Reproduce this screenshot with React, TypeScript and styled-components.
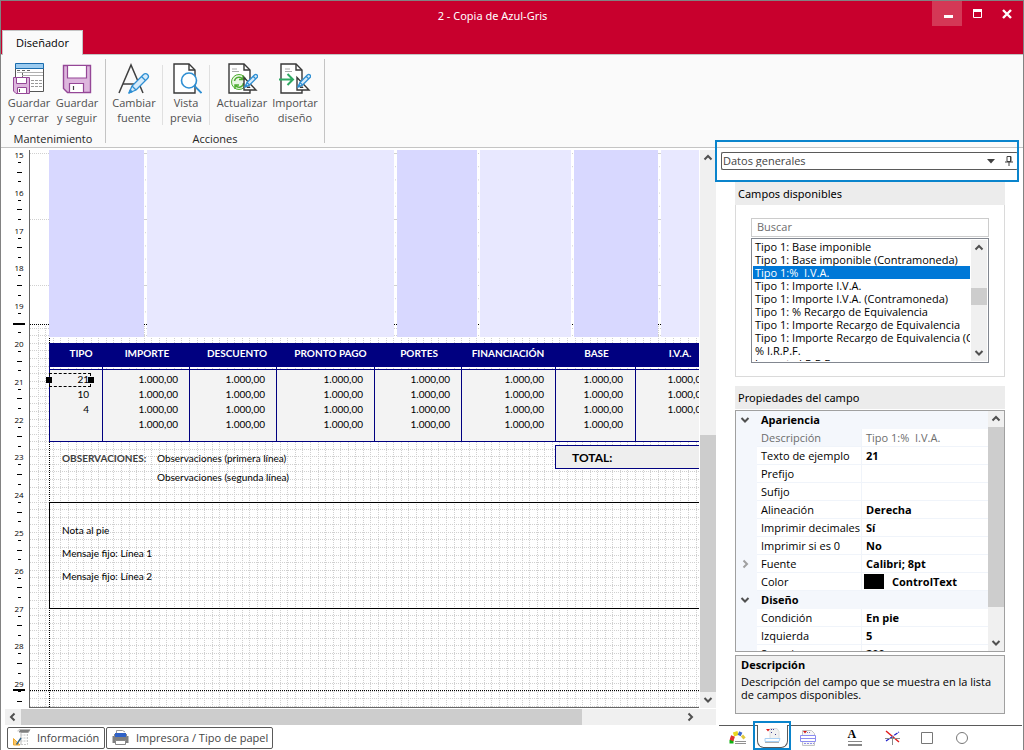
import React from "react";
import styled, { createGlobalStyle, css } from "styled-components";

const GlobalStyle = createGlobalStyle`
  * { box-sizing: border-box; }
  body { margin: 0; background: #fff; }
  button, input, select { font: inherit; color: inherit; }
  button { padding: 0; border: 0; background: none; cursor: pointer; }
`;

const ui = `"Open Sans", "Noto Sans", sans-serif`;
const heading = `"Noto Sans", "Open Sans", sans-serif`;
const doc = `Lato, "Open Sans", sans-serif`;

/* ---------- window frame ---------- */

const Window = styled.div`
  display: flex;
  flex-direction: column;
  height: 100vh;
  overflow: hidden;
  border: 1px solid #828282;
  border-bottom: 0;
  background: #fff;
  font: 11px/15px ${ui};
  color: #000;
`;

const TitleBar = styled.header`
  background: #c8002d;
  border-bottom: 1px solid #c4c4c4;
`;

const TitleRow = styled.div`
  display: flex;
  height: 29px;
  padding-right: 1px;
`;

const Title = styled.h1`
  flex: 1;
  margin: 0;
  padding-left: 52px;
  text-align: center;
  font-family: ${heading};
  font-size: 11px;
  font-weight: 400;
  line-height: 30px;
  color: #fff;
`;

const WindowButton = styled.button<{ $lit?: boolean }>`
  display: flex;
  align-items: center;
  justify-content: center;
  width: 30px;
  height: 25px;
  background: ${(p) => (p.$lit ? "#d43856" : "transparent")};
`;

const TabStrip = styled.nav`
  display: flex;
  height: 24px;
  padding-left: 1px;
`;

const RibbonTab = styled.button`
  width: 81px;
  height: 25px;
  padding-bottom: 1px;
  border: 1px solid #c4c4c4;
  border-bottom: 0;
  background: #fafafa;
  text-align: center;
`;

/* ---------- ribbon ---------- */

const Ribbon = styled.div`
  display: flex;
  height: 93px;
  background: #fafafa;
  border-bottom: 1px solid #c4c4c4;
`;

const RibbonGroup = styled.section`
  display: flex;
  flex-direction: column;
  align-items: center;
  margin: 4px 0;
  padding: 0 4px;
  border-right: 1px solid #c4c4c4;
`;

const RibbonItems = styled.div`
  display: flex;
  flex: none;
  height: 72px;
`;

const RibbonButton = styled.button<{ $w: number }>`
  display: flex;
  flex-direction: column;
  align-items: center;
  width: ${(p) => p.$w}px;
  padding-top: 3px;
  color: #505050;
  text-align: center;
  white-space: nowrap;

  svg {
    display: block;
    flex: none;
    margin-bottom: 1px;
  }
`;

const ItemDivider = styled.span`
  width: 1px;
  margin: 6px 4px;
  background: #e0e0e0;
`;

const GroupLabel = styled.span`
  color: #262626;
`;

/* ---------- designer ---------- */

const Main = styled.main`
  flex: 1;
  display: flex;
  min-height: 0;
`;

const Designer = styled.section`
  flex: 1;
  min-width: 0;
  display: flex;
  flex-direction: column;
  padding: 2px 0 1px;
`;

const Stage = styled.div`
  flex: 1;
  display: flex;
  min-height: 0;
`;

const Ruler = styled.div`
  width: 28px;
  padding-left: 8px;
  overflow: hidden;
  font-size: 8px;
`;

const RulerScale = styled.div`
  position: relative;
  display: flex;
  flex-direction: column;
  height: 567px;
`;

const Centimetre = styled.div`
  flex: 1;
  display: flex;
  flex-direction: column;
  align-items: center;
`;

const RulerNumber = styled.span`
  flex: 1;
  line-height: 9px;
`;

const Tick = styled.span<{ $long?: boolean }>`
  flex: 1;
  width: ${(p) => (p.$long ? 5 : 3)}px;
  padding-top: 3px;

  &::before {
    content: "";
    display: block;
    height: 1px;
    background: #000;
  }
`;

const BandMark = styled.span<{ $y: number }>`
  position: absolute;
  left: 4px;
  top: ${(p) => p.$y}px;
  width: 12px;
  height: 2px;
  background: #000;
`;

const Canvas = styled.div`
  position: relative;
  flex: 1;
  min-width: 0;
  margin-right: 1px;
  padding-left: 19px;
  overflow: hidden;
  border-left: 1px solid #666;
  border-bottom: 1px solid #666;
  background: #fff;
  font-family: ${doc};
  font-size: 10px;
`;

const GridLayer = styled.svg`
  position: absolute;
  left: 0;
  top: 0;
  width: 100%;
  height: 100%;
`;

const Sheet = styled.div`
  position: relative;
  width: 100%;
`;

const Bands = styled.div`
  display: flex;
  gap: 3px;
  height: 187px;
`;

const Band = styled.div<{ $w: number; $dark?: boolean }>`
  flex: none;
  width: ${(p) => p.$w}px;
  background: ${(p) => (p.$dark ? "#d8d8ff" : "#e8e8ff")};
`;

const TotalsTable = styled.table`
  width: 671px;
  margin-top: 6px;
  table-layout: fixed;
  border-collapse: separate;
  border-spacing: 0;
`;

const HeadCell = styled.th<{ $indent: number }>`
  height: 24px;
  padding: 0 0 4px ${(p) => p.$indent}px;
  background: #000080;
  color: #fff;
  text-align: center;
  white-space: nowrap;
`;

const GapCell = styled.td`
  height: 2px;
  padding: 0;
  border-left: 1px solid #000080;
`;

const DataCell = styled.td<{ $first: boolean; $last: boolean; $end: number }>`
  position: relative;
  padding: ${(p) => (p.$first ? 2 : 0)}px ${(p) => p.$end}px ${(p) => (p.$last ? 9 : 0)}px 0;
  border-left: 1px solid #000080;
  border-top: ${(p) => (p.$first ? "1px solid #000080" : "0")};
  border-bottom: ${(p) => (p.$last ? "1px solid #000080" : "0")};
  background: #f3f3f3;
  text-align: right;
  line-height: 15px;
`;

const Selection = styled.span`
  position: absolute;
  left: -1px;
  top: 3px;
  width: 42px;
  height: 14px;
  border: 1px dashed #000;

  &::before,
  &::after {
    content: "";
    position: absolute;
    top: 3px;
    width: 6px;
    height: 6px;
    background: #000;
  }
  &::before { left: -4px; }
  &::after { right: -4px; }
`;

const NotesRow = styled.div`
  display: grid;
  grid-template-columns: 95px 398px 180px;
  margin-top: 3px;
  padding-left: 13px;
  line-height: 19px;
`;

const NotesLabel = styled.strong`
  padding-top: 4px;
  color: #404040;
`;

const NotesText = styled.div`
  padding-top: 4px;
`;

const TotalBox = styled.strong`
  height: 24px;
  padding-left: 16px;
  border: 1px solid #000080;
  background: #eee;
  font-size: 12px;
  line-height: 24px;
`;

const FootBox = styled.div`
  width: 673px;
  height: 107px;
  margin-top: 15px;
  padding: 16px 12px;
  border: 1px solid #000;
  line-height: 23px;
`;

/* ---------- scroll bars ---------- */

const VScroll = styled.div`
  display: flex;
  flex-direction: column;
  flex: none;
  width: 16px;
  background: #f0f0f0;
`;

const HScroll = styled.div`
  display: flex;
  flex: none;
  height: 16px;
  margin: 1px 0 2px 4px;
  padding-right: 18px;
  background: #f0f0f0;
`;

const ScrollButton = styled.button`
  display: flex;
  flex: none;
  align-items: center;
  justify-content: center;
  width: 16px;
  height: 16px;
`;

const Track = styled.div<{ $row?: boolean }>`
  flex: 1;
  display: flex;
  flex-direction: ${(p) => (p.$row ? "row" : "column")};
`;

const Space = styled.span<{ $grow: number }>`
  flex: ${(p) => p.$grow};
`;

const Thumb = styled.span<{ $grow: number }>`
  flex: ${(p) => p.$grow};
  background: #cdcdcd;
`;

/* ---------- bottom tabs ---------- */

const SheetTabs = styled.nav`
  display: flex;
  gap: 1px;
  padding-left: 6px;
`;

const SheetTab = styled.button<{ $w: number; $gap: number }>`
  display: flex;
  align-items: center;
  gap: ${(p) => p.$gap}px;
  width: ${(p) => p.$w}px;
  height: 22px;
  padding: 0 0 1px 5px;
  border: 1px solid #5a5a5a;
  border-radius: 2px;
  color: #444;
  white-space: nowrap;
`;

/* ---------- side panel ---------- */

const Side = styled.aside`
  position: relative;
  display: flex;
  flex-direction: column;
  flex: none;
  width: 307px;
  padding: 4px 0 0 4px;
`;

const Callout = styled.span<{ $low?: boolean }>`
  position: absolute;
  z-index: 2;
  pointer-events: none;
  border: 2px solid #0a84cc;
  ${(p) =>
    p.$low
      ? css`left: 37px; bottom: 0; width: 38px; height: 29px;`
      : css`left: -1px; top: -8px; width: 304px; height: 42px;`}
`;

const PickerBar = styled.div`
  display: flex;
  align-items: center;
  height: 18px;
  margin: 0 5px 0 1px;
  border: 1px solid #5a5a5a;
  border-right: 0;
  border-radius: 2px;
`;

const Picker = styled.select`
  flex: 1;
  height: 16px;
  padding: 0 0 2px 1px;
  border: 0;
  outline: 0;
  background: none;
  appearance: none;
  color: #444;
`;

const PinButton = styled.button`
  display: flex;
  width: 19px;
  margin-left: 4px;
  justify-content: center;
`;

const PanelHead = styled.h2`
  height: 23px;
  margin: 0;
  padding-left: 3px;
  background: #ececec;
  font-family: ${heading};
  font-size: 11px;
  font-weight: 400;
  line-height: 23px;
`;

const Panel = styled.section`
  margin: 12px 18px 0 15px;
`;

const PropertyPanel = styled.section`
  margin: 9px 18px 0 15px;
  flex: 1;
  min-height: 0;
  display: flex;
  flex-direction: column;
`;

const FieldsBox = styled.div`
  height: 172px;
  padding: 13px 15px 0;
  border: 1px solid #dadada;
  border-top: 0;
`;

const Search = styled.input`
  display: block;
  width: 100%;
  height: 19px;
  padding: 0 5px 2px;
  border: 1px solid #ccc;
  outline: 0;

  &::placeholder { color: #6d6d6d; opacity: 1; }
`;

const ListFrame = styled.div`
  display: flex;
  height: 125px;
  margin-top: 1px;
  padding: 1px;
  border: 1px solid #828790;
`;

const FieldList = styled.ul`
  flex: 1;
  min-width: 0;
  margin: 0;
  padding: 0 1px 0 0;
  overflow: hidden;
  list-style: none;
`;

const FieldItem = styled.li<{ $on: boolean }>`
  padding-left: 2px;
  overflow: hidden;
  line-height: 13px;
  white-space: pre;
  background: ${(p) => (p.$on ? "#0078d7" : "transparent")};
  color: ${(p) => (p.$on ? "#fff" : "#000")};
`;

const PropFrame = styled.div`
  flex: 1;
  display: flex;
  min-height: 0;
  margin-top: 1px;
  border: 1px solid #a0a0a0;
`;

const PropClip = styled.div`
  flex: 1;
  min-width: 0;
  overflow: hidden;
  background: #f4f7fc;
`;

const PropTable = styled.table`
  width: 100%;
  table-layout: fixed;
  border-collapse: separate;
  border-spacing: 0;
`;

const Gutter = styled.td`
  width: 21px;
  height: 18px;
  padding: 0 3px 2px 0;
  text-align: center;
  line-height: 16px;

  svg { display: inline-block; vertical-align: middle; }
`;

const CategoryCell = styled.th`
  height: 18px;
  padding: 0 4px;
  text-align: left;
  line-height: 16px;
`;

const NameCell = styled.th<{ $dim?: boolean }>`
  width: 105px;
  padding: 0 0 0 4px;
  border-bottom: 1px solid #f0f4fa;
  border-right: 1px solid #f0f4fa;
  background: ${(p) => (p.$dim ? "transparent" : "#fff")};
  color: ${(p) => (p.$dim ? "#6d6d6d" : "#000")};
  font-weight: 400;
  text-align: left;
  line-height: 17px;
  white-space: nowrap;
`;

const ValueCell = styled.td<{ $dim?: boolean }>`
  padding: 0 0 0 4px;
  border-bottom: 1px solid #f0f4fa;
  background: #fff;
  color: ${(p) => (p.$dim ? "#6d6d6d" : "#000")};
  font-weight: ${(p) => (p.$dim ? 400 : 700)};
  line-height: 17px;
  white-space: pre;
`;

const Swatch = styled.span`
  display: inline-block;
  width: 20px;
  height: 15px;
  margin: 1px 8px 0 -2px;
  background: #000;
  vertical-align: top;
`;

const HelpBox = styled.div`
  flex: none;
  height: 59px;
  margin-top: 3px;
  padding: 2px 5px;
  border: 1px solid #a0a0a0;
  background: #f0f0f0;
  line-height: 13px;

  h3 {
    margin: 0 0 4px;
    font-size: 11px;
    font-weight: 700;
  }
  p { margin: 0; white-space: nowrap; }
`;

const ToolTabs = styled.nav`
  display: flex;
  height: 25px;
  margin: 11px 1px 0 -1px;
  border-top: 1px solid #5a5a5a;
`;

const ToolTab = styled.button<{ $on?: boolean; $w: number }>`
  display: flex;
  align-items: center;
  justify-content: center;
  width: ${(p) => p.$w}px;
  height: 23px;
  margin-top: ${(p) => (p.$on ? -1 : 0)}px;
  border: ${(p) => (p.$on ? "1px solid #5a5a5a" : "0")};
  border-top: 0;
  border-radius: 0 0 7px 7px;
  background: #fff;
`;

/* ---------- icons ---------- */

const Pencil = ({ x, y, s }: { x: number; y: number; s: number }) => (
  <g transform={`translate(${x} ${y}) scale(${s})`} stroke="#2f8fd3" strokeWidth={1.3 / s} strokeLinejoin="round">
    <path d="M0 20 3 13 14.5 1.500a2.600 2.600 0 0 1 4 4L7 17z" fill="#d6ebfa" />
    <path d="M3 13l4 4M12.500 3.500l4 4" fill="none" />
    <path d="M0 20l1.200-3 1.800 1.800z" fill="#2f8fd3" />
  </g>
);

const Page = () => (
  <>
    <path d="M1 1h15l6 6v23H1z" fill="#fff" stroke="#383838" strokeWidth="1.400" />
    <path d="M16 1v6h6" fill="none" stroke="#383838" strokeWidth="1.400" />
  </>
);

const IconSaveClose = () => (
  <svg width="32" height="32" viewBox="0 0 32 32">
    <path d="M2.500 3v26.500h28V3" fill="#fff" stroke="#555" />
    <path d="M2.500 1.500h28v5h-28z" fill="#9bcbf0" stroke="#1a6cae" />
    <path d="M4 8.500h3M9 8.500h3M14 8.500h3M9.500 10v6" stroke="#666" fill="none" />
    <path d="M4 10.500h26M9 13.500h21" stroke="#b0b0b0" fill="none" />
    <path d="M18 18.500h11M18 21.500h11M18 24.500h11" stroke="#999" strokeDasharray="3 1" fill="none" />
    <path d="M.5 15.500h16v16H3l-2.500-2.500z" fill="#ddb6dd" stroke="#954797" />
    <path d="M3.500 15.500h10v6h-10zM4.500 25.500h9v6h-9z" fill="#fff" stroke="#954797" />
    <path d="M6.500 27v3" stroke="#555" />
  </svg>
);

const IconSave = () => (
  <svg width="32" height="32" viewBox="0 0 32 32">
    <path d="M2.500 3.500h27v27H6.500l-4-4z" fill="#ddb6dd" stroke="#954797" strokeWidth="1.400" />
    <path d="M6.500 3.500h19v12.500h-19zM8.500 21.500h14v9h-14z" fill="#fff" stroke="#954797" strokeWidth="1.200" />
    <path d="M12.500 24v4" stroke="#444" strokeWidth="1.200" />
  </svg>
);

const IconFont = () => (
  <svg width="32" height="32" viewBox="0 0 32 32">
    <path d="M1 31 13 3l12 28M5 22h17" fill="none" stroke="#404040" strokeWidth="1.500" />
    <Pencil x={11} y={11} s={1} />
  </svg>
);

const IconPreview = () => (
  <svg width="32" height="32" viewBox="0 0 32 32">
    <g transform="translate(3 1)"><Page /></g>
    <circle cx="19" cy="18.500" r="7.500" fill="#fff" stroke="#2f8fd3" strokeWidth="1.600" />
    <path d="M24.500 24l7 7" stroke="#2f8fd3" strokeWidth="1.800" />
  </svg>
);

const Drafting = () => (
  <>
    <path d="M6 7h5M6 9.500h7" stroke="#aaa" />
    <path d="M18 15.500 30 28H18z" fill="#fff" stroke="#383838" strokeWidth="1.400" />
    <path d="M21 22.500v3h3z" fill="#fff" stroke="#383838" />
    <Pencil x={19} y={12} s={0.65} />
  </>
);

const IconRefresh = () => (
  <svg width="32" height="32" viewBox="0 0 32 32">
    <g transform="translate(2 1)"><Page /></g>
    <circle cx="13" cy="20" r="7.500" fill="#eaf6e4" stroke="#4fae32" />
    <path d="M8.500 19a4.500 4.500 0 0 1 8-2M17.500 21a4.500 4.500 0 0 1-8 2.500M17 13.500V17.500h-4M9 27v-4h4" fill="none" stroke="#4fae32" strokeWidth="1.500" />
    <Drafting />
  </svg>
);

const IconImport = () => (
  <svg width="32" height="32" viewBox="0 0 32 32">
    <g transform="translate(1 1)"><Page /></g>
    <path d="M0 17.500h13M8.500 12l5.500 5.500L8.500 23" fill="none" stroke="#2ea862" strokeWidth="2" />
    <Drafting />
  </svg>
);

const Chevron = ({ to, color = "#505050" }: { to: "up" | "down" | "left" | "right"; color?: string }) => {
  const d = {
    up: "M1.500 6.500 5 3l3.500 3.500",
    down: "M1.500 3 5 6.500 8.500 3",
    left: "M6.500 1.500 3 5l3.500 3.500",
    right: "M3.500 1.500 7 5 3.500 8.500",
  }[to];
  return (
    <svg width="10" height="10" viewBox="0 0 10 10">
      <path d={d} fill="none" stroke={color} strokeWidth="2" />
    </svg>
  );
};

const IconInfo = () => (
  <svg width="18" height="18" viewBox="0 0 18 18">
    <path d="M5 2.500C5 1 6 .5 7 .5h10l-1.500 3H8V16" fill="#fff" stroke="#bbb" />
    <path d="M6 3C6 1.500 7 1 8 1h9l-2 2.500H6z" fill="#808080" />
    <path d="M7.500 6h7M7.500 9h7M7.500 12h7M8 15.500h6.500V4" stroke="#c8c8c8" strokeDasharray="2 1" fill="none" />
    <path d="M.5 9.500V16H7z" fill="#f7c66b" stroke="#eda92f" />
    <path d="M3.500 15.500 8 9" stroke="#33658a" strokeWidth="1.400" />
  </svg>
);

const IconPrinter = () => (
  <svg width="17" height="16" viewBox="0 0 17 16">
    <path d="M4.500 3V.5h6L13 2" fill="#fff" stroke="#999" />
    <path d="M.5 6h16v7h-16z" fill="#808080" />
    <path d="M2 4h13v3H2z" fill="#888" />
    <path d="M3 3h11v4H3z" fill="#2f62c8" />
    <path d="M3.500 10.500h10v4h-10z" fill="#fff" stroke="#888" />
  </svg>
);

const IconPalette = () => (
  <svg width="18" height="18" viewBox="0 0 18 18">
    <path d="M2.500 14.500V11" stroke="#10b010" strokeWidth="4" />
    <path d="M2.500 11.500 4 7" stroke="#e03030" strokeWidth="4" />
    <path d="M4.500 5.500 9 4" stroke="#e8d820" strokeWidth="4" />
    <path d="M9.500 4 12.500 5.500" stroke="#3a66d0" strokeWidth="4" />
    <path d="M13 6.500 15.500 9.500" stroke="#e0c840" strokeWidth="3" />
    <path d="M6 12.500h11M6 14.500h11" stroke="#909090" />
  </svg>
);

const IconHeaderBand = () => (
  <svg width="18" height="18" viewBox="0 0 18 18">
    <path d="M6 1.500h7l2 3V12H6z" fill="#f1f1f1" stroke="#dcdcdc" />
    <path d="M2 2h4L4 4.500z" fill="#e01818" />
    <path d="M7 2.500h3M7 5.500h2M11 7.500h2" stroke="#404090" strokeDasharray="1 1" />
    <path d="M1 11.500h15l-1 3H1z" fill="#fff" stroke="#a8d0f4" />
    <path d="M1 15.500h14" stroke="#b0b0b0" />
  </svg>
);

const IconBodyBand = () => (
  <svg width="18" height="18" viewBox="0 0 18 18">
    <path d="M3.500 1.500h9l3 3v12h-12z" fill="#f6f6f6" stroke="#c4c4c4" />
    <path d="M4 2h4L6 4.500z" fill="#d01818" />
    <path d="M8 3.500h4" stroke="#8080c0" strokeDasharray="1 1" />
    <path d="M1.500 6.500h15v6h-15z" fill="#fff" stroke="#8c8cf0" />
    <path d="M1 9.500h16" stroke="#8c8cf0" />
    <path d="M5 14.500h10" stroke="#9090e8" strokeDasharray="2 1" />
  </svg>
);

const LetterTool = styled.span`
  display: flex;
  flex-direction: column;
  width: 14px;
  height: 17px;
  font: 700 12px/10px "Liberation Serif", serif;
  border-bottom: 1px solid #888;
  text-align: left;

  &::after {
    content: "";
    height: 4px;
    margin-top: 2px;
    border-top: 1px solid #888;
    border-bottom: 1px solid #888;
  }
`;

const IconLines = () => (
  <svg width="17" height="16" viewBox="0 0 17 16">
    <path d="M2 1 15 12" stroke="#e01818" strokeWidth="1.400" />
    <path d="M2 11 15 2" stroke="#2020c8" strokeWidth="1.200" strokeDasharray="4 1" />
    <path d="M1 8.500h15M8.500 6v9" stroke="#8a8a8a" />
  </svg>
);

/* ---------- data ---------- */

const columns = [
  { label: "TIPO", w: 53, indent: 11, end: 13 },
  { label: "IMPORTE", w: 87, indent: 3, end: 11 },
  { label: "DESCUENTO", w: 87, indent: 9, end: 11 },
  { label: "PRONTO PAGO", w: 98, indent: 11, end: 11 },
  { label: "PORTES", w: 87, indent: 3, end: 11 },
  { label: "FINANCIACIÓN", w: 94, indent: 0, end: 11 },
  { label: "BASE", w: 80, indent: 3, end: 12 },
  { label: "I.V.A.", w: 85, indent: 5, end: 13 },
];

const amount = "1.000,00";
const rows = ["21", "10", "4", ""].map((type, i) => [
  type,
  amount, amount, amount, amount, amount, amount,
  i < 3 ? amount : "",
]);

const fields = [
  "Tipo 1: Base imponible",
  "Tipo 1: Base imponible (Contramoneda)",
  "Tipo 1:%  I.V.A.",
  "Tipo 1: Importe I.V.A.",
  "Tipo 1: Importe I.V.A. (Contramoneda)",
  "Tipo 1: % Recargo de Equivalencia",
  "Tipo 1: Importe Recargo de Equivalencia",
  "Tipo 1: Importe Recargo de Equivalencia (Contramoneda)",
  "% I.R.P.F.",
  "Importe I.R.P.F.",
];

type Prop = { name: string; value?: string; category?: boolean; dim?: boolean; opens?: boolean; swatch?: boolean };
const props: Prop[] = [
  { name: "Apariencia", category: true },
  { name: "Descripción", value: "Tipo 1:%  I.V.A.", dim: true },
  { name: "Texto de ejemplo", value: "21" },
  { name: "Prefijo", value: "" },
  { name: "Sufijo", value: "" },
  { name: "Alineación", value: "Derecha" },
  { name: "Imprimir decimales", value: "Sí" },
  { name: "Imprimir si es 0", value: "No" },
  { name: "Fuente", value: "Calibri; 8pt", opens: true },
  { name: "Color", value: "ControlText", swatch: true },
  { name: "Diseño", category: true },
  { name: "Condición", value: "En pie" },
  { name: "Izquierda", value: "5" },
  { name: "Superior", value: "200" },
];

const centimetres = Array.from({ length: 15 }, (_, i) => 15 + i);

/* Millimetre-style dotted grid: coarse over the body band, fine over the footer band. */
const fineX = Array.from({ length: 210 }, (_, i) => Math.floor(8.3 + i * 7.56) + 0.5);
const fineY = Array.from({ length: 110 }, (_, i) => Math.floor(178.3 + i * 7.56) + 0.5);

const Grid = () => (
  <GridLayer aria-hidden="true">
    <g stroke="#d0d0d0" strokeDasharray="1 1">
      {[3.5, 69.5, 135.5].map((y) => <line key={y} x1="0" x2="100%" y1={y} y2={y} />)}
      {fineY.map((y) => <line key={y} x1="0" x2="100%" y1={y} y2={y} />)}
      {fineX.map((x) => <line key={x} x1={x} x2={x} y1="176" y2="100%" />)}
    </g>
    <g stroke="#d0d0d0" strokeDasharray="1 12.200">
      {[115.5, 365.5, 448.5, 542.5, 629.5].map((x) => <line key={x} x1={x} x2={x} y1="3" y2="174" />)}
    </g>
    <g stroke="#000" strokeDasharray="1 1">
      <line x1="0" x2="100%" y1="174.500" y2="174.500" />
      <line x1="0" x2="100%" y1="540.500" y2="540.500" />
      <line x1="19.500" x2="19.500" y1="174" y2="100%" />
    </g>
  </GridLayer>
);

export default function App() {
  return (
    <Window>
      <GlobalStyle />
      <TitleBar>
        <TitleRow>
          <Title>2 - Copia de Azul-Gris</Title>
          <WindowButton $lit aria-label="Minimizar">
            <svg width="12" height="12"><path d="M3 7h9v3H3z" fill="#fff" /></svg>
          </WindowButton>
          <WindowButton aria-label="Maximizar">
            <svg width="10" height="10"><path d="M1.500.5h8v8h-8z" fill="none" stroke="#fff" /><path d="M1 0h9v3H1z" fill="#fff" /></svg>
          </WindowButton>
          <WindowButton aria-label="Cerrar">
            <svg width="10" height="10"><path d="M1 1l8 8M9 1 1 9" stroke="#fff" strokeWidth="2.400" /></svg>
          </WindowButton>
        </TitleRow>
        <TabStrip><RibbonTab>Diseñador</RibbonTab></TabStrip>
      </TitleBar>

      <Ribbon>
        <RibbonGroup>
          <RibbonItems>
            <RibbonButton $w={48}><IconSaveClose />Guardar<br />y cerrar</RibbonButton>
            <RibbonButton $w={48}><IconSave />Guardar<br />y seguir</RibbonButton>
          </RibbonItems>
          <GroupLabel>Mantenimiento</GroupLabel>
        </RibbonGroup>
        <RibbonGroup>
          <RibbonItems>
            <RibbonButton $w={48}><IconFont />Cambiar<br />fuente</RibbonButton>
            <ItemDivider />
            <RibbonButton $w={38}><IconPreview />Vista<br />previa</RibbonButton>
            <ItemDivider />
            <RibbonButton $w={56}><IconRefresh />Actualizar<br />diseño</RibbonButton>
            <RibbonButton $w={50}><IconImport />Importar<br />diseño</RibbonButton>
          </RibbonItems>
          <GroupLabel>Acciones</GroupLabel>
        </RibbonGroup>
      </Ribbon>

      <Main>
        <Designer>
          <Stage>
            <Ruler>
              <RulerScale>
                {centimetres.map((n) => (
                  <Centimetre key={n}>
                    <RulerNumber>{n}</RulerNumber>
                    <Tick /><Tick $long /><Tick />
                  </Centimetre>
                ))}
                <BandMark $y={173} />
                <BandMark $y={539} />
              </RulerScale>
            </Ruler>
            <Canvas>
              <Grid />
              <Sheet>
                <Bands>
                  <Band $w={95} $dark />
                  <Band $w={247} />
                  <Band $w={80} $dark />
                  <Band $w={91} />
                  <Band $w={84} $dark />
                  <Band $w={90} />
                </Bands>
                <TotalsTable>
                  <colgroup>
                    {columns.map((c) => <col key={c.label} width={c.w} />)}
                  </colgroup>
                  <thead>
                    <tr>{columns.map((c) => <HeadCell key={c.label} $indent={c.indent}>{c.label}</HeadCell>)}</tr>
                  </thead>
                  <tbody>
                    <tr>{columns.map((c) => <GapCell key={c.label} />)}</tr>
                    {rows.map((row, r) => (
                      <tr key={r}>
                        {row.map((cell, c) => (
                          <DataCell key={c} $first={r === 0} $last={r === rows.length - 1} $end={columns[c].end}>
                            {cell}
                            {r === 0 && c === 0 && <Selection />}
                          </DataCell>
                        ))}
                      </tr>
                    ))}
                  </tbody>
                </TotalsTable>
                <NotesRow>
                  <NotesLabel>OBSERVACIONES:</NotesLabel>
                  <NotesText>Observaciones (primera línea)<br />Observaciones (segunda línea)</NotesText>
                  <TotalBox>TOTAL:</TotalBox>
                </NotesRow>
                <FootBox>Nota al pie<br />Mensaje fijo: Línea 1<br />Mensaje fijo: Línea 2</FootBox>
              </Sheet>
            </Canvas>
            <VScroll>
              <ScrollButton aria-label="Subir"><Chevron to="up" /></ScrollButton>
              <Track><Space $grow={269} /><Thumb $grow={257} /></Track>
              <ScrollButton aria-label="Bajar"><Chevron to="down" /></ScrollButton>
            </VScroll>
          </Stage>
          <HScroll>
            <ScrollButton aria-label="Izquierda"><Chevron to="left" /></ScrollButton>
            <Track $row><Thumb $grow={561} /><Space $grow={100} /></Track>
            <ScrollButton aria-label="Derecha"><Chevron to="right" /></ScrollButton>
          </HScroll>
          <SheetTabs>
            <SheetTab $w={98} $gap={6}><IconInfo />Información</SheetTab>
            <SheetTab $w={167} $gap={7}><IconPrinter />Impresora / Tipo de papel</SheetTab>
          </SheetTabs>
        </Designer>

        <Side>
          <Callout />
          <PickerBar>
            <Picker aria-label="Grupo de datos"><option>Datos generales</option></Picker>
            <svg width="8" height="5"><path d="M0 0h8L4 4.500z" fill="#404040" /></svg>
            <PinButton aria-label="Fijar">
              <svg width="8" height="10"><path d="M2 .5h4v5H2zM5.500 1v5M0 6h8M4 6v4" fill="none" stroke="#404040" /></svg>
            </PinButton>
          </PickerBar>

          <Panel>
            <PanelHead>Campos disponibles</PanelHead>
            <FieldsBox>
              <Search placeholder="Buscar" aria-label="Buscar" />
              <ListFrame>
                <FieldList role="listbox" aria-label="Campos disponibles">
                  {fields.map((f, i) => (
                    <FieldItem key={f} role="option" aria-selected={i === 2} $on={i === 2}>{f}</FieldItem>
                  ))}
                </FieldList>
                <VScroll>
                  <ScrollButton aria-label="Subir lista"><Chevron to="up" /></ScrollButton>
                  <Track><Space $grow={32} /><Thumb $grow={17} /><Space $grow={40} /></Track>
                  <ScrollButton aria-label="Bajar lista"><Chevron to="down" /></ScrollButton>
                </VScroll>
              </ListFrame>
            </FieldsBox>
          </Panel>

          <PropertyPanel>
            <PanelHead>Propiedades del campo</PanelHead>
            <PropFrame>
              <PropClip>
                <PropTable>
                  <colgroup><col width="21" /><col width="105" /><col /></colgroup>
                  <tbody>
                    {props.map((p) =>
                      p.category ? (
                        <tr key={p.name}>
                          <Gutter><Chevron to="down" /></Gutter>
                          <CategoryCell colSpan={2}>{p.name}</CategoryCell>
                        </tr>
                      ) : (
                        <tr key={p.name}>
                          <Gutter>{p.opens && <Chevron to="right" color="#a0a0a0" />}</Gutter>
                          <NameCell scope="row" $dim={p.dim}>{p.name}</NameCell>
                          <ValueCell $dim={p.dim}>{p.swatch && <Swatch />}{p.value}</ValueCell>
                        </tr>
                      )
                    )}
                  </tbody>
                </PropTable>
              </PropClip>
              <VScroll>
                <ScrollButton aria-label="Subir propiedades"><Chevron to="up" /></ScrollButton>
                <Track><Thumb $grow={180} /><Space $grow={28} /></Track>
                <ScrollButton aria-label="Bajar propiedades"><Chevron to="down" /></ScrollButton>
              </VScroll>
            </PropFrame>
            <HelpBox>
              <h3>Descripción</h3>
              <p>Descripción del campo que se muestra en la lista<br />de campos disponibles.</p>
            </HelpBox>
          </PropertyPanel>

          <ToolTabs>
            <ToolTab $w={38} aria-label="Colores"><IconPalette /></ToolTab>
            <ToolTab $w={31} $on aria-label="Campos"><IconHeaderBand /></ToolTab>
            <ToolTab $w={40} aria-label="Bandas"><IconBodyBand /></ToolTab>
            <ToolTab $w={53} aria-label="Texto"><LetterTool>A</LetterTool></ToolTab>
            <ToolTab $w={22} aria-label="Líneas"><IconLines /></ToolTab>
            <ToolTab $w={47} aria-label="Rectángulo">
              <svg width="12" height="12"><path d="M.5.500h11v11H.500z" fill="none" stroke="#777" /></svg>
            </ToolTab>
            <ToolTab $w={23} aria-label="Círculo">
              <svg width="12" height="12"><circle cx="6" cy="6" r="5.500" fill="none" stroke="#777" /></svg>
            </ToolTab>
          </ToolTabs>
          <Callout $low />
        </Side>
      </Main>
    </Window>
  );
}
